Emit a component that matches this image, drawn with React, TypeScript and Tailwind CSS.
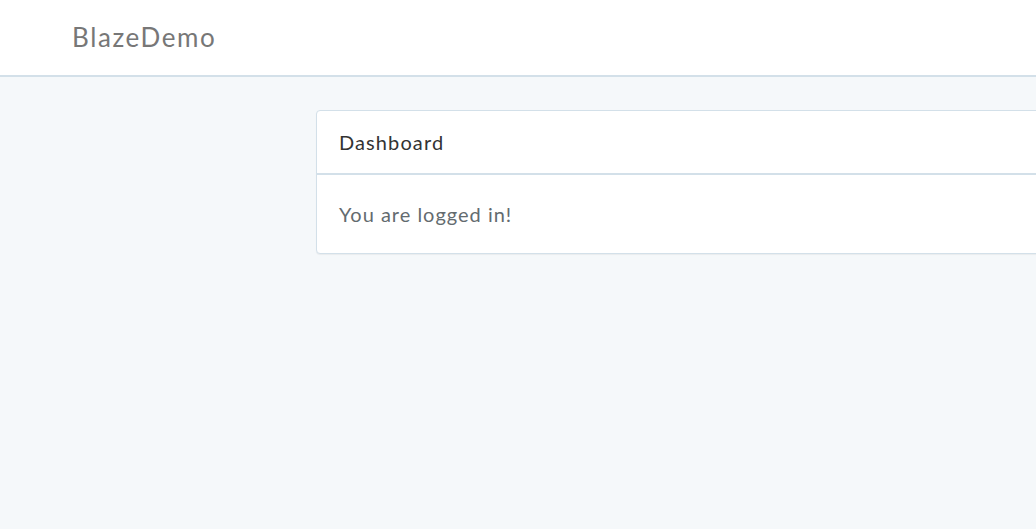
export default function App() {
  return (
    <div
      className="w-[1036px] h-[529px] overflow-hidden bg-[#f5f8fa]"
      style={{ fontFamily: "Lato, 'Open Sans', sans-serif" }}
    >
      {/* Navbar */}
      <nav className="h-[77px] bg-white border-b-2 border-[#d3e0e9] flex items-center pl-[72px]">
        <span className="text-[26px] leading-none text-[#777] tracking-[1.6px] -mt-[1px]">BlazeDemo</span>
      </nav>

      {/* Content */}
      <div className="pt-[33px] pl-[316px]">
        <div className="w-[780px] bg-white border border-[#d3e0e9] rounded-[4px] shadow-[0_1px_1px_rgba(0,0,0,0.05)]">
          <div className="h-[64px] border-b-2 border-[#d3e0e9] flex items-center px-[22px] text-[20px] text-[#333] tracking-[1.1px]">
            Dashboard
          </div>
          <div className="h-[78px] flex items-center px-[22px] text-[20px] text-[#636b6f] tracking-[1px]">
            You are logged in!
          </div>
        </div>
      </div>
    </div>
  );
}
